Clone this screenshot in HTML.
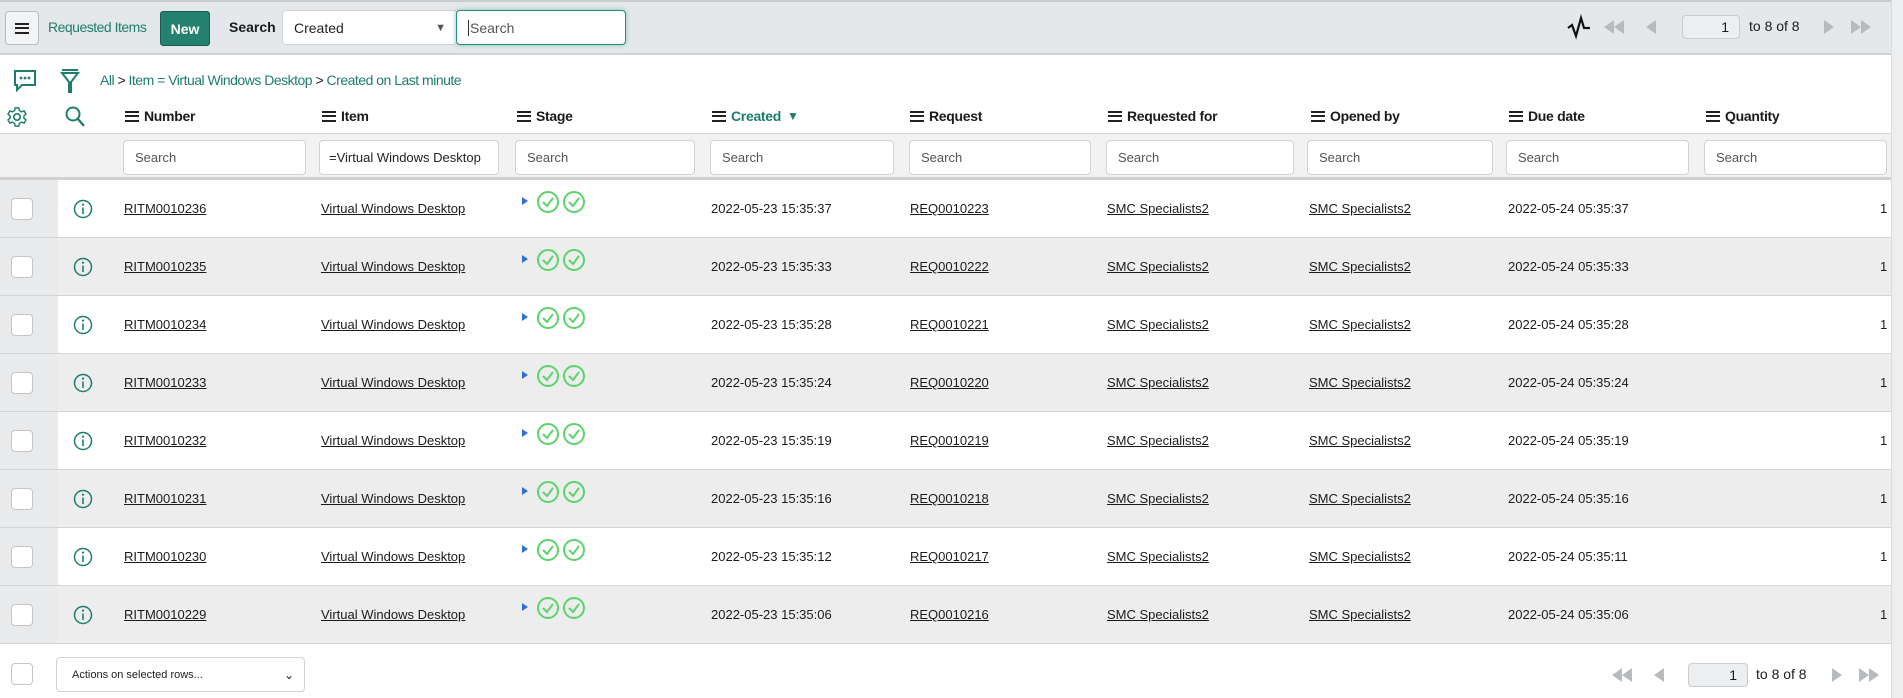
<!DOCTYPE html>
<html><head><meta charset="utf-8"><style>
*{box-sizing:border-box;margin:0;padding:0}
body{width:1903px;height:698px;overflow:hidden;background:#fff;font-family:"Liberation Sans",sans-serif;font-size:13px;color:#1b1b1b;position:relative}
.a{position:absolute}
.hdr{left:0;top:0;width:1891px;height:55px;background:#e5e8eb;border-top:2px solid #c9cdd1;border-bottom:2px solid #d0d3d6}
.btn{border:1px solid #b9bcbf;border-radius:4px;background:#f3f4f5}
.inp{background:#fff;border:1px solid #cfd2d5;border-radius:4px;color:#555;font-size:13px;padding-left:11px;display:flex;align-items:center}
.teal{color:#1f7d6e}
.th{font-weight:bold;font-size:14px;top:108px;display:flex;align-items:center;letter-spacing:-0.3px}
.ham{display:inline-block;width:14px;height:11px;border-top:2px solid #222;border-bottom:2px solid #222;position:relative;margin-right:5px}
.ham:after{content:"";position:absolute;left:0;right:0;top:2.5px;border-top:2px solid #222}
.row{left:0;width:1891px;height:58px;border-bottom:1px solid #d4d4d4}
.cb{width:22px;height:22px;border:1px solid #c4c4c4;border-radius:4px;background:#fff}
.u{text-decoration:underline}
.cell{top:0;line-height:58px;white-space:nowrap}
</style></head><body>
<div class="a hdr"></div>
<div class="a btn" style="left:5px;top:11px;width:34px;height:34px;display:flex;align-items:center;justify-content:center"><span class="ham" style="margin:0"></span></div>
<div class="a teal" style="left:48px;top:19px;font-size:14px;letter-spacing:-0.5px">Requested Items</div>
<div class="a" style="left:160px;top:11px;width:50px;height:35px;background:#24806f;border:1px solid #1a5c50;border-radius:3px;color:#fff;font-weight:bold;font-size:14px;display:flex;align-items:center;justify-content:center">New</div>
<div class="a" style="left:229px;top:19px;font-weight:bold;font-size:14px">Search</div>
<div class="a inp" style="left:282px;top:10px;width:175px;height:35px;color:#222;font-size:14px">Created<span style="position:absolute;right:10px;font-size:11px;color:#555">▼</span></div>
<div class="a inp" style="left:456px;top:10px;width:170px;height:35px;border:1px solid #2a8a7b;box-shadow:0 0 5px #7fbfb3;font-size:14px"><span style="border-left:1px solid #333;padding-left:1px">Search</span></div>
<svg class="a" style="left:1566px;top:14px" width="26" height="26" viewBox="0 0 26 26"><path d="M2 14 L6 11 L10 22 L15 4 L18 14 L24 14" fill="none" stroke="#111" stroke-width="2.2"/></svg>
<svg class="a" style="left:1603px;top:18px" width="60" height="18" viewBox="0 0 60 18"><path d="M1 9 L11 2 V16Z M11 9 L21 2 V16Z M43 9 L53 2 V16Z" fill="#b8bbbe"/></svg>
<div class="a" style="left:1682px;top:15px;width:58px;height:24px;border:1px solid #c9ccd0;border-radius:4px;background:#eceef0;text-align:right;padding-right:10px;line-height:22px;font-size:14px">1</div>
<div class="a" style="left:1749px;top:18px;font-size:14px">to 8 of 8</div>
<svg class="a" style="left:1823px;top:18px" width="50" height="18" viewBox="0 0 50 18"><path d="M1 2 L11 9 L1 16Z M28 2 L38 9 L28 16Z M38 2 L48 9 L38 16Z" fill="#b8bbbe"/></svg>
<div class="a" style="left:1891px;top:0;width:12px;height:698px;background:#eceeef;border-left:1px solid #dcdcdc"></div>
<!-- breadcrumb -->
<svg class="a" style="left:13px;top:69px" width="24" height="24" viewBox="0 0 24 24"><path d="M2 2 H22 V16 H9 L4 21 V16 H2 Z" fill="none" stroke="#1f7d6e" stroke-width="2"/><circle cx="8" cy="9" r="1.4" fill="#1f7d6e"/><circle cx="12" cy="9" r="1.4" fill="#1f7d6e"/><circle cx="16" cy="9" r="1.4" fill="#1f7d6e"/></svg>
<svg class="a" style="left:60px;top:68px" width="20" height="26" viewBox="0 0 20 26"><path d="M2 2 H18 M2 5 H18 L11 14 V24 L9 24 V14 Z" fill="none" stroke="#1f7d6e" stroke-width="2"/></svg>
<div class="a" style="left:100px;top:72px;font-size:14px;letter-spacing:-0.5px"><span class="teal">All</span> &gt; <span class="teal">Item = Virtual Windows Desktop</span> &gt; <span class="teal">Created on Last minute</span></div>
<svg class="a" style="left:6px;top:106px" width="22" height="22" viewBox="0 0 24 24"><circle cx="12" cy="12" r="3.5" fill="none" stroke="#1f7d6e" stroke-width="1.8"/><path d="M10 2h4l.6 3 2.4 1.4 2.8-1 2 3.4-2.3 2v2.4l2.3 2-2 3.4-2.8-1-2.4 1.4-.6 3h-4l-.6-3-2.4-1.4-2.8 1-2-3.4 2.3-2v-2.4l-2.3-2 2-3.4 2.8 1L9.4 5z" fill="none" stroke="#1f7d6e" stroke-width="1.6"/></svg>
<svg class="a" style="left:64px;top:105px" width="22" height="24" viewBox="0 0 22 24"><circle cx="9" cy="9" r="6.5" fill="none" stroke="#1f7d6e" stroke-width="2"/><path d="M14 14 L20 21" stroke="#1f7d6e" stroke-width="2.4"/></svg>
<div class="a th" style="left:125px"><span class="ham"></span>Number</div>
<div class="a th" style="left:322px"><span class="ham"></span>Item</div>
<div class="a th" style="left:517px"><span class="ham"></span>Stage</div>
<div class="a th teal" style="left:712px"><span class="ham"></span>Created <span style="font-size:12px;margin-left:6px">▼</span></div>
<div class="a th" style="left:910px"><span class="ham"></span>Request</div>
<div class="a th" style="left:1108px"><span class="ham"></span>Requested for</div>
<div class="a th" style="left:1311px"><span class="ham"></span>Opened by</div>
<div class="a th" style="left:1509px"><span class="ham"></span>Due date</div>
<div class="a th" style="left:1706px"><span class="ham"></span>Quantity</div>
<div class="a" style="left:0;top:133px;width:1891px;height:47px;background:#f2f2f2;border-top:1px solid #d6d6d6;border-bottom:3px solid #d0d0d0"></div>
<div class="a inp" style="left:123px;top:140px;width:183px;height:35px">Search</div>
<div class="a inp" style="left:319px;top:140px;width:180px;height:35px;color:#222;overflow:hidden;white-space:nowrap;padding-left:9px">=Virtual Windows Desktop</div>
<div class="a inp" style="left:515px;top:140px;width:180px;height:35px">Search</div>
<div class="a inp" style="left:710px;top:140px;width:184px;height:35px">Search</div>
<div class="a inp" style="left:909px;top:140px;width:182px;height:35px">Search</div>
<div class="a inp" style="left:1106px;top:140px;width:188px;height:35px">Search</div>
<div class="a inp" style="left:1307px;top:140px;width:186px;height:35px">Search</div>
<div class="a inp" style="left:1506px;top:140px;width:183px;height:35px">Search</div>
<div class="a inp" style="left:1704px;top:140px;width:183px;height:35px">Search</div>
<div id="rows"></div>
<script>
var d=[["236","223","37","37"],["235","222","33","33"],["234","221","28","28"],["233","220","24","24"],["232","219","19","19"],["231","218","16","16"],["230","217","12","11"],["229","216","06","06"]];
var h="";
d.forEach(function(r,i){var t=180+i*58;var bg=i%2?"#ededed":"#fff";
h+='<div class="a row" style="top:'+t+'px;background:'+bg+'">'+
'<div class="a" style="left:0;top:0;width:58px;height:57px;background:#e8eaec"></div>'+
'<div class="a cb" style="left:11px;top:18px"></div>'+
'<svg class="a" style="left:73px;top:19px" width="20" height="20" viewBox="0 0 20 20"><circle cx="10" cy="10" r="8.5" fill="none" stroke="#1f7d6e" stroke-width="1.5"/><path d="M10 8.5V15" stroke="#1f7d6e" stroke-width="1.6"/><circle cx="10" cy="5.6" r="1.1" fill="#1f7d6e"/></svg>'+
'<div class="a cell u" style="left:124px">RITM0010'+r[0]+'</div>'+
'<div class="a cell u" style="left:321px">Virtual Windows Desktop</div>'+
'<svg class="a" style="left:520px;top:10px" width="70" height="26" viewBox="0 0 70 26"><path d="M2 7 L8 11 L2 15Z" fill="#2f6fd6"/><circle cx="28" cy="12" r="10" fill="none" stroke="#5bd46b" stroke-width="2"/><path d="M23 12 L27 16 L33 8" fill="none" stroke="#5bd46b" stroke-width="2"/><circle cx="54" cy="12" r="10" fill="none" stroke="#5bd46b" stroke-width="2"/><path d="M49 12 L53 16 L59 8" fill="none" stroke="#5bd46b" stroke-width="2"/></svg>'+
'<div class="a cell" style="left:711px">2022-05-23 15:35:'+r[2]+'</div>'+
'<div class="a cell u" style="left:910px">REQ0010'+r[1]+'</div>'+
'<div class="a cell u" style="left:1107px">SMC Specialists2</div>'+
'<div class="a cell u" style="left:1309px">SMC Specialists2</div>'+
'<div class="a cell" style="left:1508px">2022-05-24 05:35:'+r[3]+'</div>'+
'<div class="a cell" style="left:1880px">1</div></div>';});
document.getElementById("rows").innerHTML=h;
</script>
<div class="a cb" style="left:11px;top:663px"></div>
<div class="a inp" style="left:56px;top:657px;width:249px;height:35px;color:#222;font-size:11px;padding-left:15px">Actions on selected rows...<span style="position:absolute;right:10px;font-size:12px">⌄</span></div>
<svg class="a" style="left:1611px;top:666px" width="60" height="18" viewBox="0 0 60 18"><path d="M1 9 L11 2 V16Z M11 9 L21 2 V16Z M43 9 L53 2 V16Z" fill="#b8bbbe"/></svg>
<div class="a" style="left:1688px;top:663px;width:60px;height:24px;border:1px solid #c9ccd0;border-radius:4px;background:#eceef0;text-align:right;padding-right:10px;line-height:22px;font-size:14px">1</div>
<div class="a" style="left:1756px;top:666px;font-size:14px">to 8 of 8</div>
<svg class="a" style="left:1831px;top:666px" width="50" height="18" viewBox="0 0 50 18"><path d="M1 2 L11 9 L1 16Z M28 2 L38 9 L28 16Z M38 2 L48 9 L38 16Z" fill="#b8bbbe"/></svg>
</body></html>
